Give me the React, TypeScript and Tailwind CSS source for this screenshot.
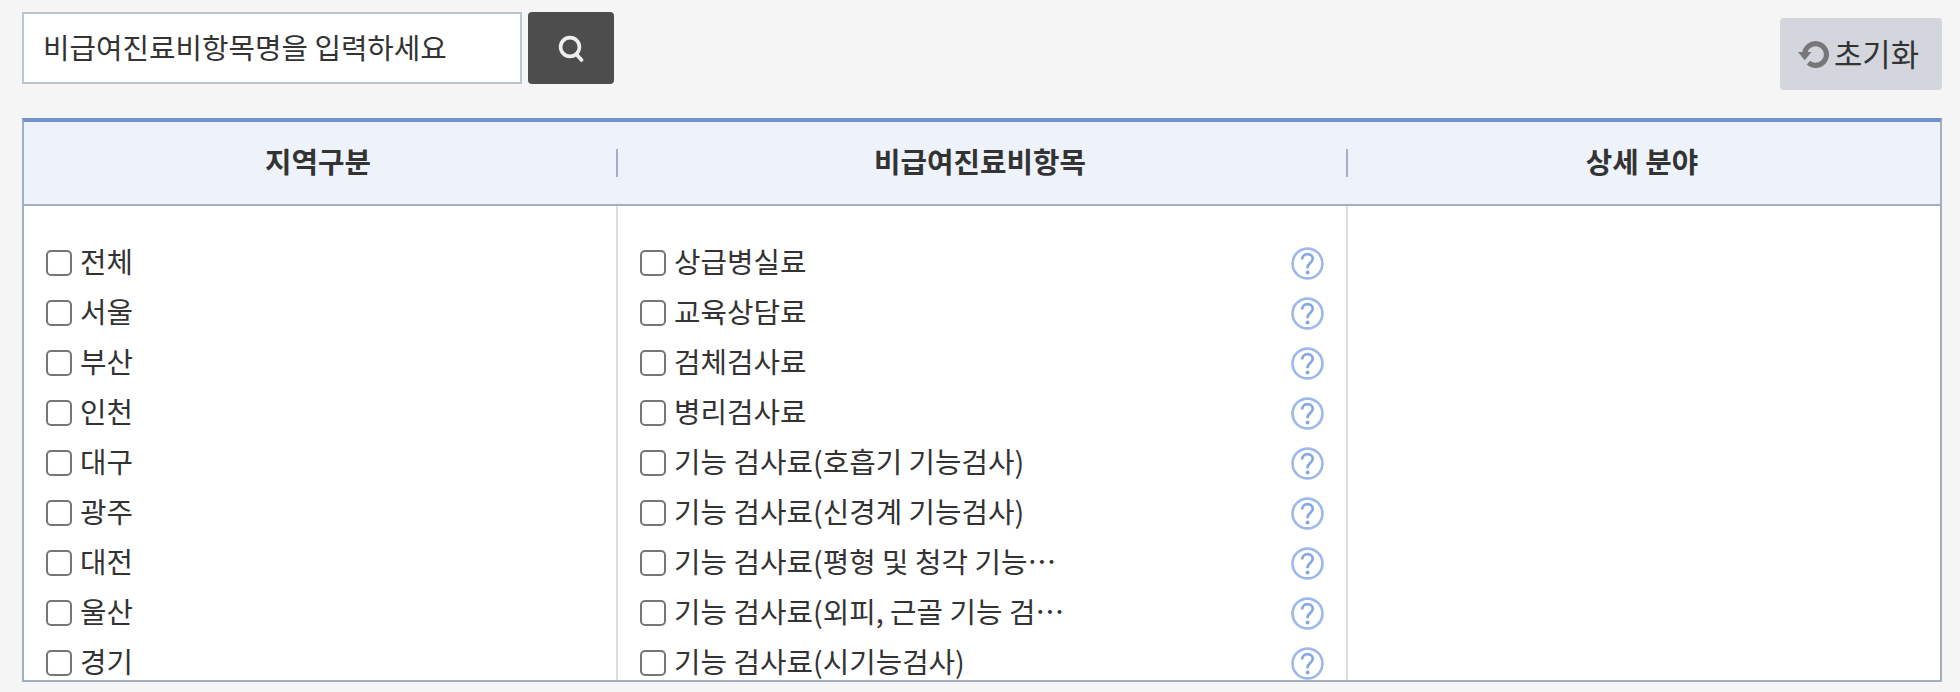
const regions = ["전체", "서울", "부산", "인천", "대구", "광주", "대전", "울산", "경기"];

const items = [
  "상급병실료",
  "교육상담료",
  "검체검사료",
  "병리검사료",
  "기능 검사료(호흡기 기능검사)",
  "기능 검사료(신경계 기능검사)",
  "기능 검사료(평형 및 청각 기능검사)",
  "기능 검사료(외피, 근골 기능 검사)",
  "기능 검사료(시기능검사)",
];

function SearchIcon() {
  return (
    <svg width="26" height="27" viewBox="0 0 26 27" fill="none" stroke="#eeeeee" strokeWidth="3.6" strokeLinecap="round">
      <circle cx="12" cy="12" r="9.4" />
      <path d="M19 20l4.5 5" />
    </svg>
  );
}

function ResetIcon() {
  return (
    <svg width="31" height="29" viewBox="0 0 30 28" fill="none">
      <path d="M6.5 14a10.5 10.5 0 1 1 3.6 7.9" stroke="#777777" strokeWidth="5" />
      <path d="M0 11.5h13l-6.5 8z" fill="#777777" />
    </svg>
  );
}

function HelpIcon() {
  return (
    <svg className="shrink-0" width="33" height="33" viewBox="0 0 32 32" fill="none">
      <circle cx="16" cy="16" r="14.5" fill="#ffffff" stroke="#9dbaea" strokeWidth="2.6" />
      <path d="M10.8 12.2c0-3.2 2.2-5.2 5.2-5.2s5.1 1.9 5.1 4.5c0 3.8-5 4.2-5 8.2v1" stroke="#85a8e2" strokeWidth="2.7" />
      <circle cx="16.1" cy="24.8" r="1.9" fill="#85a8e2" />
    </svg>
  );
}

function CheckRow({ label, help }: { label: string; help?: boolean }) {
  return (
    <div className="flex h-[50px] items-center">
      <label className="flex min-w-0 items-center gap-[8px]">
        <input type="checkbox" className="h-[26px] w-[26px] shrink-0 appearance-none rounded-[5px] border-2 border-[#767676] bg-white" />
        <span className="max-w-[394px] truncate pb-[5px]">{label}</span>
      </label>
      {help && (
        <span className="ml-auto flex">
          <HelpIcon />
        </span>
      )}
    </div>
  );
}

function HeadCell({ title, className, divider }: { title: string; className: string; divider?: boolean }) {
  return (
    <div className={`flex items-center ${className}`}>
      <div className="flex-1 pr-[4px] pb-[4px] text-center font-bold">{title}</div>
      {divider && <div className="h-[28px] w-[2px] bg-[#a3aec2]" />}
    </div>
  );
}

export default function App() {
  return (
    <div
      className="h-[692px] overflow-hidden bg-[#f5f5f5] pt-[12px] pr-[18px] pl-[22px] text-[28.8px] text-[#333333]"
      style={{ fontFamily: '"Noto Sans CJK KR", "Noto Sans", sans-serif' }}
    >
      <div className="flex items-start">
        <div className="flex h-[72px] w-[500px] items-center border-2 border-[#b9c5d1] bg-white pb-[3px] pl-[19px]">
          비급여진료비항목명을 입력하세요
        </div>
        <button className="ml-[6px] flex h-[72px] w-[86px] items-center justify-center rounded-[4px] bg-[#4d4d4d]">
          <SearchIcon />
        </button>
        <button className="mt-[6px] ml-auto flex h-[72px] w-[162px] items-center gap-[5px] rounded-[4px] bg-[#d3d6dc] pl-[18px] text-[30.8px]">
          <ResetIcon />
          <span className="pb-[2px]">초기화</span>
        </button>
      </div>

      <div className="mt-[28px] h-[564px] overflow-hidden border-x-2 border-t-4 border-b-2 border-[#a3aec2] border-t-[#7094c9] bg-white">
        <div className="flex h-[84px] border-b-2 border-[#a3aec2] bg-[#eef3fb]">
          <HeadCell title="지역구분" className="w-[594px]" divider />
          <HeadCell title="비급여진료비항목" className="w-[730px]" divider />
          <HeadCell title="상세 분야" className="flex-1" />
        </div>
        <div className="flex h-[474px]">
          <div className="w-[594px] border-r-2 border-[#dddddd] pt-[32px] pl-[22px]">
            {regions.map((r) => (
              <CheckRow key={r} label={r} />
            ))}
          </div>
          <div className="w-[730px] border-r-2 border-[#dddddd] pt-[32px] pr-[22px] pl-[22px]">
            {items.map((r) => (
              <CheckRow key={r} label={r} help />
            ))}
          </div>
          <div className="flex-1" />
        </div>
      </div>
    </div>
  );
}
